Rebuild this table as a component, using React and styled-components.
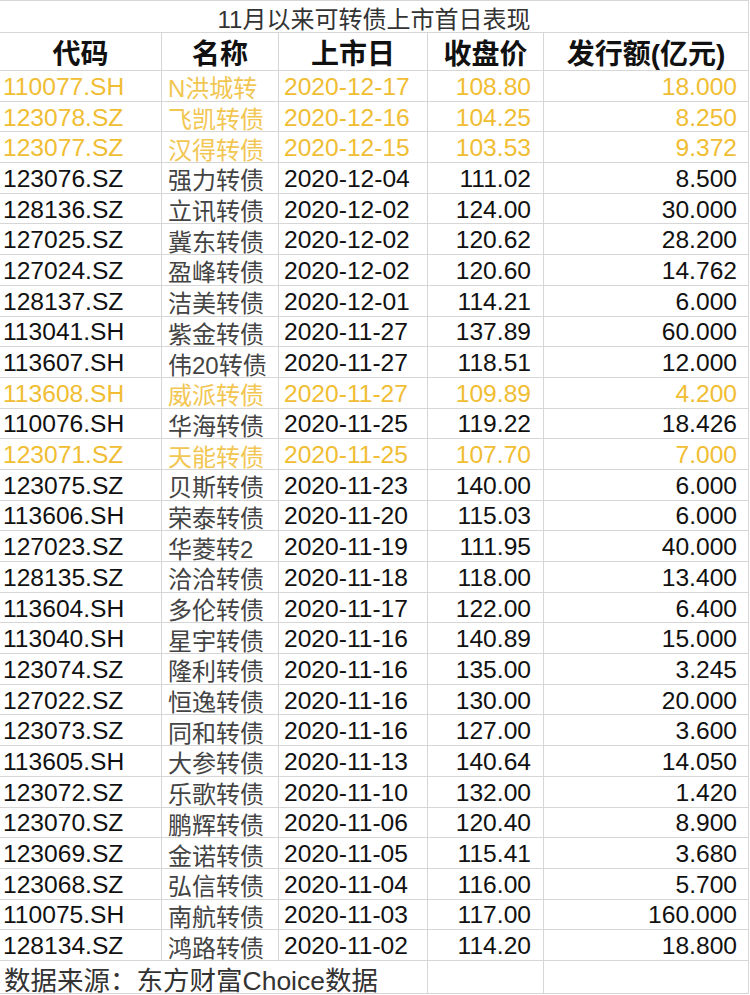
import React from 'react'
import styled, { createGlobalStyle } from 'styled-components'

const GlobalStyle = createGlobalStyle`
  html, body {
    margin: 0;
    padding: 0;
    background: #fff;
  }
`

const lineColor = '#d6d6d6'
const yellow = '#f0bd33'

const Sheet = styled.div`
  display: grid;
  grid-template-columns: 162px 117px 149px 116px 205px;
  grid-template-rows: 32px 38px repeat(29, 30.69px) 33px;
  width: 749px;
  border-top: 1px solid ${lineColor};
  font-family: "Liberation Sans", "Noto Sans CJK SC", sans-serif;
`

const TitleCell = styled.div`
  grid-column: 1 / -1;
  display: flex;
  align-items: center;
  justify-content: center;
  padding-top: 2px;
  box-sizing: border-box;
  border-right: 1px solid ${lineColor};
  border-bottom: 1px solid ${lineColor};
  font-size: 24px;
  color: #333;
`

const HeadCell = styled.div`
  display: flex;
  align-items: center;
  justify-content: center;
  box-sizing: border-box;
  border-right: 1px solid ${lineColor};
  border-bottom: 1px solid ${lineColor};
  font-size: 28px;
  font-weight: 700;
  color: #111;
  white-space: nowrap;
`

const Cell = styled.div`
  display: flex;
  align-items: center;
  justify-content: ${p => (p.$right ? 'flex-end' : 'flex-start')};
  padding: 2px ${p => p.$pr || 0}px 0 ${p => p.$pl || 0}px;
  box-sizing: border-box;
  border-right: 1px solid ${lineColor};
  border-bottom: 1px solid ${lineColor};
  font-size: ${p => (p.$soft ? 24 : 24.6)}px;
  color: ${p => (p.$hl ? (p.$soft ? '#f2c652' : yellow) : p.$soft ? '#444' : '#111')};
  white-space: nowrap;
  overflow: hidden;
`

const FootCell = styled.div`
  grid-column: ${p => p.$span || 'auto'};
  display: flex;
  align-items: center;
  padding: 3px 0 0 4px;
  box-sizing: border-box;
  border-right: 1px solid ${lineColor};
  border-bottom: 1px solid ${lineColor};
  font-size: 26.5px;
  color: #333;
  white-space: nowrap;
`

const headers = ['代码', '名称', '上市日', '收盘价', '发行额(亿元)']

const rows = [
  ['110077.SH', 'N洪城转', '2020-12-17', '108.80', '18.000', true],
  ['123078.SZ', '飞凯转债', '2020-12-16', '104.25', '8.250', true],
  ['123077.SZ', '汉得转债', '2020-12-15', '103.53', '9.372', true],
  ['123076.SZ', '强力转债', '2020-12-04', '111.02', '8.500'],
  ['128136.SZ', '立讯转债', '2020-12-02', '124.00', '30.000'],
  ['127025.SZ', '冀东转债', '2020-12-02', '120.62', '28.200'],
  ['127024.SZ', '盈峰转债', '2020-12-02', '120.60', '14.762'],
  ['128137.SZ', '洁美转债', '2020-12-01', '114.21', '6.000'],
  ['113041.SH', '紫金转债', '2020-11-27', '137.89', '60.000'],
  ['113607.SH', '伟20转债', '2020-11-27', '118.51', '12.000'],
  ['113608.SH', '威派转债', '2020-11-27', '109.89', '4.200', true],
  ['110076.SH', '华海转债', '2020-11-25', '119.22', '18.426'],
  ['123071.SZ', '天能转债', '2020-11-25', '107.70', '7.000', true],
  ['123075.SZ', '贝斯转债', '2020-11-23', '140.00', '6.000'],
  ['113606.SH', '荣泰转债', '2020-11-20', '115.03', '6.000'],
  ['127023.SZ', '华菱转2', '2020-11-19', '111.95', '40.000'],
  ['128135.SZ', '洽洽转债', '2020-11-18', '118.00', '13.400'],
  ['113604.SH', '多伦转债', '2020-11-17', '122.00', '6.400'],
  ['113040.SH', '星宇转债', '2020-11-16', '140.89', '15.000'],
  ['123074.SZ', '隆利转债', '2020-11-16', '135.00', '3.245'],
  ['127022.SZ', '恒逸转债', '2020-11-16', '130.00', '20.000'],
  ['123073.SZ', '同和转债', '2020-11-16', '127.00', '3.600'],
  ['113605.SH', '大参转债', '2020-11-13', '140.64', '14.050'],
  ['123072.SZ', '乐歌转债', '2020-11-10', '132.00', '1.420'],
  ['123070.SZ', '鹏辉转债', '2020-11-06', '120.40', '8.900'],
  ['123069.SZ', '金诺转债', '2020-11-05', '115.41', '3.680'],
  ['123068.SZ', '弘信转债', '2020-11-04', '116.00', '5.700'],
  ['110075.SH', '南航转债', '2020-11-03', '117.00', '160.000'],
  ['128134.SZ', '鸿路转债', '2020-11-02', '114.20', '18.800'],
]

const App = () => (
  <>
    <GlobalStyle />
    <Sheet>
      <TitleCell>11月以来可转债上市首日表现</TitleCell>
      {headers.map(h => <HeadCell key={h}>{h}</HeadCell>)}
      {rows.map(([code, name, date, close, amount, hl]) => (
        <React.Fragment key={code}>
          <Cell $hl={hl} $pl={3}>{code}</Cell>
          <Cell $hl={hl} $soft $pl={6}>{name}</Cell>
          <Cell $hl={hl} $pl={5}>{date}</Cell>
          <Cell $hl={hl} $right $pr={12}>{close}</Cell>
          <Cell $hl={hl} $right $pr={11}>{amount}</Cell>
        </React.Fragment>
      ))}
      <FootCell $span="1 / 4">数据来源：东方财富Choice数据</FootCell>
      <FootCell />
      <FootCell />
    </Sheet>
  </>
)

export default App
